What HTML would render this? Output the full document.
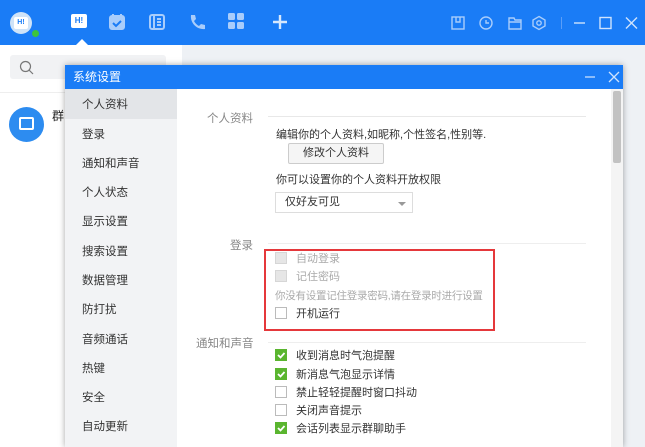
<!DOCTYPE html>
<html><head><meta charset="utf-8"><style>
*{margin:0;padding:0;box-sizing:border-box}
body{width:645px;height:447px;overflow:hidden;position:relative;background:#eef1f5;font-family:"Liberation Sans","Noto Sans CJK SC",sans-serif;font-size:11px;color:#333}
.abs{position:absolute}
.top{left:0;top:0;width:645px;height:45px;background:#1a7cf6}
.left{left:0;top:45px;width:182px;height:402px;background:#fff}
.dlg{left:65px;top:65px;width:558px;height:382px;background:#fff;box-shadow:0 0 6px rgba(0,0,0,.35)}
.dt{left:0;top:0;width:558px;height:24px;background:#1a7cf6;color:#fff;font-size:12px;line-height:24px;padding-left:8px}
.side{left:0;top:24px;width:112px;height:358px;background:#f2f3f5}
.si{position:absolute;left:17px;font-size:11.5px;color:#333}
.cb{position:absolute;width:12px;height:12px;border:1px solid #bbb;background:#fff}
.cb.g{background:#5ab52f;border-color:#5ab52f}
.cb.d{background:#e6e6e6;border-color:#d6d6d6}
.t{position:absolute;font-size:11px;white-space:nowrap}
</style></head><body>
<div class="abs top">
 <div class="abs" style="left:10px;top:12px;width:22px;height:22px;border-radius:50%;background:#cfe3f8"></div>
 <div class="abs" style="left:14px;top:17px;width:14px;height:12px;border-radius:2px;background:#fff;color:#1a7cf6;font-size:7px;font-weight:bold;text-align:center;line-height:12px">H!</div>
 <div class="abs" style="left:31px;top:29px;width:9px;height:9px;border-radius:50%;background:#3dc43d;border:1.5px solid #1a7cf6"></div>
 <div class="abs" style="left:71px;top:14px;width:16px;height:14px;border-radius:2px;background:#fff;color:#1a7cf6;font-size:8px;font-weight:bold;text-align:center;line-height:14px">H!</div>
 <div class="abs" style="left:76px;top:39px;width:0;height:0;border-left:6px solid transparent;border-right:6px solid transparent;border-bottom:6px solid #fff"></div>
 <svg class="abs" style="left:108px;top:13px" width="18" height="18" viewBox="0 0 18 18" fill="none" stroke="#a9cdfb" stroke-width="2"><rect x="2" y="3" width="14" height="13" rx="2" fill="#a9cdfb"/><path d="M5 1v4M13 1v4" /><path d="M5 10l3 3 5-5" stroke="#1a7cf6"/></svg>
 <svg class="abs" style="left:148px;top:13px" width="18" height="18" viewBox="0 0 18 18" fill="none" stroke="#a9cdfb" stroke-width="2"><rect x="2" y="2" width="14" height="14" rx="2"/><path d="M6 2v14M9 6h4M9 9h4M9 12h4"/></svg>
 <svg class="abs" style="left:188px;top:13px" width="18" height="18" viewBox="0 0 18 18"><path d="M3 2l4 0 1 4-2 2c1 2 3 4 5 5l2-2 4 1v4c-8 1-15-6-14-14z" fill="#a9cdfb"/></svg>
 <svg class="abs" style="left:228px;top:13px" width="16" height="16" viewBox="0 0 16 16" fill="#a9cdfb"><rect x="0" y="0" width="7" height="7" rx="1.5"/><rect x="9" y="0" width="7" height="7" rx="1.5"/><rect x="0" y="9" width="7" height="7" rx="1.5"/><rect x="9" y="9" width="7" height="7" rx="1.5"/></svg>
 <svg class="abs" style="left:272px;top:14px" width="16" height="16" viewBox="0 0 16 16" stroke="#d6e8fd" stroke-width="2.4"><path d="M8 1v14M1 8h14"/></svg>
 <svg class="abs" style="left:450px;top:15px" width="100" height="16" viewBox="0 0 100 16" fill="none" stroke="#a9cdfb" stroke-width="1.4"><rect x="2" y="2" width="12" height="12"/><path d="M6 2v5h4V2"/><circle cx="36" cy="8" r="6"/><path d="M36 5v3h3"/><path d="M59 3h5l1 2h6v9H59z M59 7h12"/><path d="M89 1.5l6 3.5v6l-6 3.5-6-3.5v-6z"/><circle cx="89" cy="8" r="2.2"/></svg>
 <div class="abs" style="left:561px;top:17px;width:1px;height:12px;background:#5b9ef8"></div>
 <svg class="abs" style="left:573px;top:16px" width="66" height="14" viewBox="0 0 66 14" fill="none" stroke="#cfe3fd" stroke-width="1.4"><path d="M1 7h11"/><rect x="27" y="1.5" width="11" height="11"/><path d="M53 1.5l11 11M64 1.5l-11 11"/></svg>
</div>
<div class="abs left">
 <div class="abs" style="left:10px;top:10px;width:156px;height:24px;background:#f1f2f4;border-radius:3px"></div>
 <svg class="abs" style="left:19px;top:15px" width="15" height="15" viewBox="0 0 15 15" fill="none" stroke="#777" stroke-width="1.2"><circle cx="6.5" cy="6.5" r="5"/><path d="M10 10l4 4"/></svg>
 <div class="abs" style="left:0;top:47px;width:182px;height:1px;background:#eee"></div>
 <div class="abs" style="left:9px;top:62px;width:35px;height:35px;border-radius:50%;background:#2d8cf0"></div>
 <div class="abs" style="left:19px;top:72px;width:15px;height:13px;border:2px solid #fff;border-radius:2px"></div>
 <div class="t" style="left:52px;top:62px;font-size:12px;color:#222">群</div>
</div>
<div class="abs dlg">
 <div class="abs dt">系统设置
  <svg class="abs" style="left:519px;top:6px" width="36" height="12" viewBox="0 0 36 12" fill="none" stroke="#cfe3fd" stroke-width="1.3"><path d="M1 6h10M25 1l10 10M35 1l-10 10"/></svg>
 </div>
 <div class="abs side">
  <div class="abs" style="left:0;top:0;width:112px;height:30px;background:#e3e5e8"></div>
  <div class="si" style="top:7px">个人资料</div>
  <div class="si" style="top:37px">登录</div>
  <div class="si" style="top:66px">通知和声音</div>
  <div class="si" style="top:95px">个人状态</div>
  <div class="si" style="top:124px">显示设置</div>
  <div class="si" style="top:154px">搜索设置</div>
  <div class="si" style="top:183px">数据管理</div>
  <div class="si" style="top:212px">防打扰</div>
  <div class="si" style="top:242px">音频通话</div>
  <div class="si" style="top:271px">热键</div>
  <div class="si" style="top:300px">安全</div>
  <div class="si" style="top:329px">自动更新</div>
 </div>
 <div class="abs" style="left:546px;top:24px;width:12px;height:358px;background:#f4f4f4"></div>
 <div class="abs" style="left:548px;top:26px;width:8px;height:72px;background:#c2c2c2;border-radius:2px"></div>
</div>
<div class="t" style="left:207px;top:110px;color:#888;font-size:11.5px">个人资料</div>
<div class="abs" style="left:268px;top:116px;width:318px;height:1px;background:#e8e8e8"></div>
<div class="t" style="left:276px;top:126px;color:#333">编辑你的个人资料,如昵称,个性签名,性别等.</div>
<div class="abs" style="left:288px;top:143px;width:96px;height:21px;border:1px solid #ccc;background:#f5f5f5;border-radius:2px;text-align:center;line-height:19px;font-size:11px">修改个人资料</div>
<div class="t" style="left:276px;top:171px">你可以设置你的个人资料开放权限</div>
<div class="abs" style="left:275px;top:192px;width:138px;height:21px;border:1px solid #ddd;background:#fff;padding-left:9px;line-height:19px">仅好友可见</div>
<div class="abs" style="left:398px;top:202px;width:0;height:0;border-left:4px solid transparent;border-right:4px solid transparent;border-top:4px solid #999"></div>
<div class="t" style="left:230px;top:237px;color:#888;font-size:11.5px">登录</div>
<div class="abs" style="left:268px;top:243px;width:318px;height:1px;background:#eee"></div>
<div class="abs" style="left:264px;top:249px;width:231px;height:82px;border:2px solid #e5383b"></div>
<div class="cb d" style="left:275px;top:252px"></div><div class="t" style="left:296px;top:250px;color:#aaa">自动登录</div>
<div class="cb d" style="left:275px;top:270px"></div><div class="t" style="left:296px;top:268px;color:#aaa">记住密码</div>
<div class="t" style="left:275px;top:288px;color:#aaa;font-size:10.5px;letter-spacing:-0.25px">你没有设置记住登录密码,请在登录时进行设置</div>
<div class="cb" style="left:275px;top:307px"></div><div class="t" style="left:296px;top:305px">开机运行</div>
<div class="t" style="left:196px;top:335px;color:#888;font-size:11.5px">通知和声音</div>
<div class="abs" style="left:268px;top:342px;width:318px;height:1px;background:#eee"></div>
<div class="cb g" style="left:275px;top:349px"></div><div class="t" style="left:296px;top:347px">收到消息时气泡提醒</div>
<div class="cb g" style="left:275px;top:368px"></div><div class="t" style="left:296px;top:366px">新消息气泡显示详情</div>
<div class="cb" style="left:275px;top:386px"></div><div class="t" style="left:296px;top:384px">禁止轻轻提醒时窗口抖动</div>
<div class="cb" style="left:275px;top:404px"></div><div class="t" style="left:296px;top:402px">关闭声音提示</div>
<div class="cb g" style="left:275px;top:422px"></div><div class="t" style="left:296px;top:420px">会话列表显示群聊助手</div>
<svg class="abs" style="left:275px;top:349px" width="12" height="90" viewBox="0 0 12 90" fill="none" stroke="#fff" stroke-width="1.8"><path d="M3 6l2.5 2.5L9.5 4"/><path d="M3 25l2.5 2.5L9.5 23"/><path d="M3 79l2.5 2.5L9.5 77"/></svg>
</body></html>
